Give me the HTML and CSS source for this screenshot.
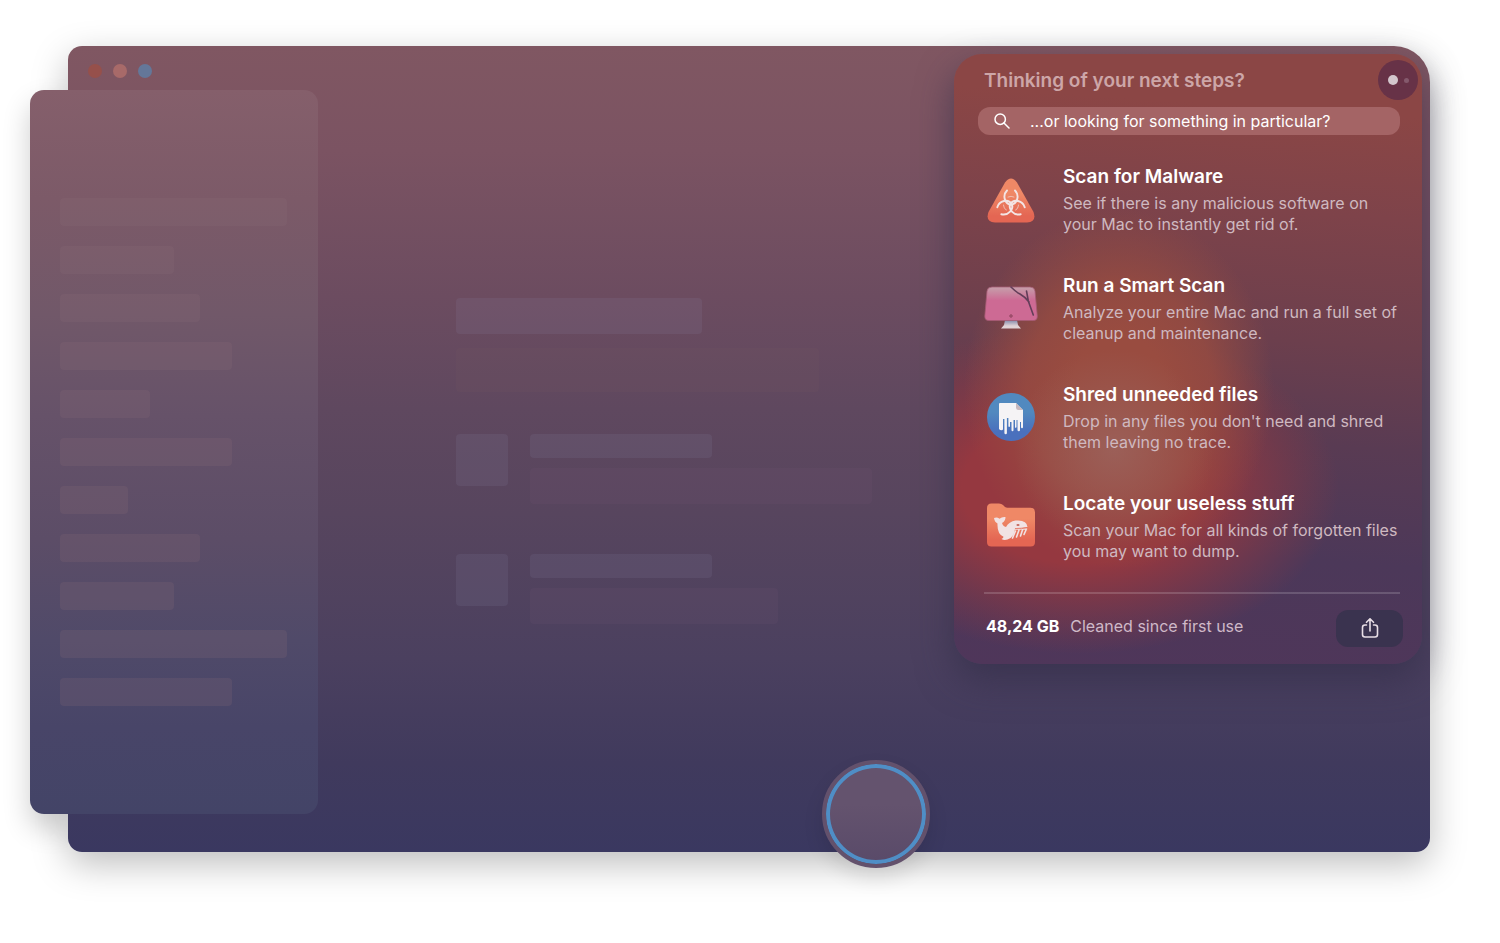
FILE: index.html
```html
<!DOCTYPE html>
<html lang="en">
<head>
<meta charset="UTF-8">
<meta name="viewport" content="width=device-width, initial-scale=1">
<title>Next steps</title>
<link rel="stylesheet" href="styles.css">
</head>
<body>
<div class="window">
  <div class="lights"><i class="red"></i><i class="pink"></i><i class="blue"></i></div>

  <div class="sidebar">
    <span class="bar full"></span>
    <span class="bar small"></span>
    <span class="bar medium"></span>
    <span class="bar large"></span>
    <span class="bar tiny"></span>
    <span class="bar large"></span>
    <span class="bar mini"></span>
    <span class="bar medium"></span>
    <span class="bar small"></span>
    <span class="bar full"></span>
    <span class="bar large"></span>
  </div>

  <div class="content">
    <div class="block heading"></div>
    <div class="block intro"></div>
    <div class="entry">
      <div class="block thumb"></div>
      <div class="lines">
        <div class="block name"></div>
        <div class="block text"></div>
      </div>
    </div>
    <div class="entry">
      <div class="block thumb"></div>
      <div class="lines">
        <div class="block name"></div>
        <div class="block text short"></div>
      </div>
    </div>
  </div>

  <div class="popup">
    <h1>Thinking of your next steps?</h1>
    <button class="more" type="button" aria-label="Assistant"><i></i><i></i></button>

    <label class="search">
      <svg width="16" height="16" viewBox="0 0 16 16" fill="none" stroke="#fff" stroke-width="1.5" stroke-linecap="round"><circle cx="6.2" cy="6.2" r="5.2"/><path d="M10 10l5 5"/></svg>
      <input type="text" aria-label="Search" placeholder="...or looking for something in particular?">
    </label>

    <div class="steps">
      <a href="#malware">
        <svg width="54" height="54" viewBox="0 0 54 54">
          <defs><linearGradient id="orange" x1="0" y1="0" x2="0" y2="1"><stop offset=".35" stop-color="#ef8866"/><stop offset=".85" stop-color="#e46653"/></linearGradient></defs>
          <path fill="url(#orange)" d="M21 10.500Q27 2.500 33 10.500L49.500 40Q53 50 43 50.500H11Q1 50 4.500 40Z"/>
          <g fill="none" stroke="#f3e4e4" stroke-width="1.900" stroke-linecap="round">
            <path id="horn" d="M23 18.500C18 23.500 21 32.500 27 32.500S36 23.500 31 18.500"/>
            <use href="#horn" transform="rotate(120 27 32)"/>
            <use href="#horn" transform="rotate(240 27 32)"/>
            <path id="link" d="M24 25q3-1.500 6 0" stroke-width="1" opacity=".6"/>
            <use href="#link" transform="rotate(120 27 32)"/>
            <use href="#link" transform="rotate(240 27 32)"/>
          </g>
        </svg>
        <div><h2>Scan for Malware</h2><p>See if there is any malicious software on<br>your Mac to instantly get rid of.</p></div>
      </a>
      <a href="#scan">
        <svg width="54" height="54" viewBox="0 0 54 54">
          <defs>
            <linearGradient id="screen" x1="0" y1="0" x2="0" y2="1"><stop offset="0" stop-color="#c6a0ab"/><stop offset=".4" stop-color="#cd6a94"/></linearGradient>
            <linearGradient id="foot" x1="0" y1="0" x2="0" y2="1"><stop offset="0" stop-color="#7e86a8"/><stop offset=".7" stop-color="#e0d3d6"/></linearGradient>
          </defs>
          <path fill="url(#foot)" d="M21 39h12l1 5 3 3.500H17l3-3.500z"/>
          <path fill="url(#screen)" stroke="#a45b74" stroke-width=".8" d="M8 6h38q4.500 0 5 4l2.300 25q.2 4.500-4 4.500H4.800q-4.200 0-4-4.500L3 10q.5-4 5-4z"/>
          <path d="M27 6q5 5 9 7 6 3.500 9 8M42.500 10l1.800 10 5 14" fill="none" stroke="#633e59" stroke-width="1.600" stroke-linecap="round"/>
          <circle cx="27" cy="35" r="1.200" fill="none" stroke="#863f57"/>
        </svg>
        <div><h2>Run a Smart Scan</h2><p>Analyze your entire Mac and run a full set of<br>cleanup and maintenance.</p></div>
      </a>
      <a href="#shred">
        <svg width="54" height="54" viewBox="0 0 54 54">
          <defs><linearGradient id="disc" x1="0" y1="0" x2="0" y2="1"><stop offset=".4" stop-color="#5189bf"/><stop offset=".8" stop-color="#4a70bd"/></linearGradient></defs>
          <circle cx="27" cy="27" r="24" fill="url(#disc)"/>
          <path fill="#f5f3f5" d="M16 13h16l7 7v17q0 1.300-1 1.300t-1-1.300v-5h-1v8q0 1.300-1.200 1.300T33.500 40V30h-1v7q0 .8-.8.8T31 37v-7h-1.500v10q0 1.300-1 1.300t-1-1.300V32h-1.500v4q0 1-.8 1t-.8-1v-8h-1.500v15q0 1.300-1.200 1.300T20.400 43V29H19v10q0 1.300-1.500 1.300T15 39V14q0-1 1-1z"/>
          <path fill="#c9b9be" d="M32 13l7 7h-4.500q-2.500 0-2.500-2.500z"/>
        </svg>
        <div><h2>Shred unneeded files</h2><p>Drop in any files you don't need and shred<br>them leaving no trace.</p></div>
      </a>
      <a href="#locate">
        <svg width="54" height="54" viewBox="0 0 54 54">
          <path fill="url(#orange)" d="M3 9q0-4.500 4.500-4.500H15q2.500 0 4 1.500l2 2q1 .7 2.500.7h23q4.500 0 4.500 4.500V43q0 4.500-4.500 4.500h-39Q3 47.500 3 43z"/>
          <g transform="translate(0 -1)">
            <path fill="#f1e2e3" d="M10 20q3-1.500 5.500.8Q18 18.500 21.500 19q0 4-3.500 6 1 3.500 4 4 3-5.500 9.500-6.500 11.500-1 12 6.500-7 1-12.500 1 0 9-7.500 11.500-3.500 1-6-.500 2-1 2-2.200-6.500-3-6-13.300-3-1.500-3.500-5.500z"/>
            <path d="M31 31h11.500M42 32l-2 4.500M38.500 32l-2 6M35 32l-2.500 7M31.500 33l-3 7" fill="none" stroke="#f1e2e3" stroke-width="1.600" stroke-linecap="round"/>
            <path d="M31 30.500q7 .8 12.500-1" fill="none" stroke="#e37361" stroke-width=".8"/>
            <ellipse cx="34" cy="27" rx="1.600" ry=".9" fill="#c4665d"/>
          </g>
        </svg>
        <div><h2>Locate your useless stuff</h2><p>Scan your Mac for all kinds of forgotten files<br>you may want to dump.</p></div>
      </a>
    </div>

    <div class="footer">
      <b>48,24 GB</b><span>Cleaned since first use</span>
      <button class="share" type="button" aria-label="Share">
        <svg width="18" height="22" viewBox="0 0 18 22" fill="none" stroke="#e9dfe6" stroke-width="1.600" stroke-linecap="round" stroke-linejoin="round"><path d="M5.500 7H4q-2.500 0-2.500 2.500v7Q1.500 19 4 19h10q2.500 0 2.500-2.500v-7Q16.500 7 14 7h-1.500M9 13V.8M5.500 4.300L9 .8l3.500 3.500"/></svg>
      </button>
    </div>
  </div>

  <button class="round" type="button" aria-label="Scan"></button>
</div>
</body>
</html>
```

FILE: styles.css
```css
* {
	box-sizing: border-box;
}
body {
	margin: 0;
	padding: 46px 70px 91px 68px;
	background: #fff;
	color: #fff;
	font-family: Inter, "Liberation Sans", Arial, sans-serif;
}
h1, h2, p {
	margin: 0;
}
button {
	border: 0;
	padding: 0;
	cursor: pointer;
}

.window {
	position: relative;
	display: flex;
	align-items: flex-start;
	border-radius: 14px 36px 14px 14px;
	background: linear-gradient(#805762, #7b5362 13%, #6c4c60 31%, #5f485f 45%, #57455e 58%, #4b405f 76%, #403a5d 89%, #3a3860);
	box-shadow: 0 12px 36px rgba(0, 0, 0, .26);
}
.lights {
	position: absolute;
	top: 18px;
	left: 20px;
	display: flex;
	gap: 11px;
}
.lights i {
	width: 14px;
	height: 14px;
	border-radius: 50%;
}
.red { background: #96504b; }
.pink { background: #a86a69; }
.blue { background: #647799; }

/* placeholders on the left */
.sidebar {
	position: relative;
	display: flex;
	flex: none;
	flex-direction: column;
	gap: 20px;
	width: 288px;
	margin: 44px 0 38px -38px;
	padding: 108px 30px;
	border-radius: 14px;
	background: linear-gradient(#855f6b, #7c5a68 15%, #715869 31%, #665269 45%, #5c4d67 62%, #504a69 76%, #484568 88%, #434467);
}
/* shadow only where the sidebar sticks out of the window */
.sidebar::before {
	content: "";
	position: absolute;
	top: 0;
	bottom: 0;
	left: 0;
	width: 38px;
	border-radius: 14px 0 0 14px;
	box-shadow: 0 14px 28px rgba(0, 0, 0, .2);
	clip-path: inset(-50px 0 -50px -50px);
}
.bar {
	height: 28px;
	border-radius: 4px;
	background: rgba(138, 108, 118, .2);
}
.full { width: 227px; }
.large { width: 172px; }
.medium { width: 140px; }
.small { width: 114px; }
.tiny { width: 90px; }
.mini { width: 68px; }

.content {
	flex: 1;
	min-width: 0;
	padding: 252px 40px 0 138px;
}
.block {
	border-radius: 4px;
	background: rgba(150, 150, 180, .12);
}
.heading {
	width: 246px;
	height: 36px;
}
.intro {
	width: 363px;
	max-width: 100%;
	height: 44px;
	margin: 14px 0 42px;
	background: rgba(130, 100, 100, .1);
}
.entry {
	display: flex;
	gap: 22px;
	margin-bottom: 50px;
}
.thumb {
	flex: none;
	width: 52px;
	height: 52px;
}
.lines {
	flex: 1;
}
.name {
	width: 182px;
	height: 24px;
}
.text {
	width: 342px;
	height: 36px;
	margin-top: 10px;
	background: rgba(120, 90, 120, .12);
}
.short {
	width: 248px;
}

.popup {
	position: relative;
	flex: none;
	width: 468px;
	margin: 8px 8px 0 0;
	padding: 13px 22px 17px 30px;
	border-radius: 28px;
	background:
		radial-gradient(circle at 160px 395px, rgba(156, 100, 94, .8), rgba(156, 90, 84, 0) 100px),
		radial-gradient(ellipse 155px 180px at 165px 335px, rgba(153, 76, 64, 1) 30%, rgba(153, 76, 64, .8) 60%, rgba(153, 76, 64, 0)),
		radial-gradient(ellipse 260px 165px at 125px 435px, rgba(149, 56, 64, 1) 45%, rgba(149, 56, 64, 0)),
		linear-gradient(184deg, #8b4645 10%, #7e434a 26%, #6c3f4d 46%, #593b53 62%, #4c3859 80%, #4f365a);
	box-shadow: 0 16px 36px rgba(46, 44, 70, .6);
}
h1 {
	color: #cda6a8;
	font-size: 19px;
	font-weight: 600;
	line-height: 28px;
}
.more {
	position: absolute;
	top: 6px;
	right: 4px;
	display: flex;
	align-items: center;
	justify-content: center;
	gap: 6px;
	width: 40px;
	height: 40px;
	border-radius: 50%;
	background: #673247;
}
.more i {
	width: 10px;
	height: 10px;
	border-radius: 50%;
	background: #d3c6cd;
}
.more i + i {
	width: 5px;
	height: 5px;
	background: #84596c;
}
.search {
	display: flex;
	align-items: center;
	gap: 20px;
	height: 28px;
	margin: 12px 0 28px -6px;
	padding: 0 16px;
	border-radius: 12px;
	background: #a46465;
}
.search svg {
	flex: none;
}
.search input {
	flex: 1;
	min-width: 0;
	border: 0;
	padding: 0;
	background: none;
	color: #fff;
	font: 16px/28px Inter, "Liberation Sans", Arial, sans-serif;
	outline: 0;
}
.search input::placeholder {
	color: #fff;
	opacity: 1;
}

.steps {
	display: flex;
	flex-direction: column;
	gap: 37px;
}
.steps a {
	display: flex;
	align-items: center;
	gap: 25px;
	color: #fff;
	text-decoration: none;
}
.steps svg {
	flex: none;
}
h2 {
	margin-bottom: 2px;
	font-size: 19px;
	font-weight: 600;
	line-height: 28px;
}
.steps p {
	color: #cfb9c0;
	font-size: 16px;
	line-height: 21px;
	white-space: nowrap;
}

.footer {
	display: flex;
	align-items: flex-start;
	margin: 30px -3px 0 0;
	padding: 16px 0 0 2px;
	background: linear-gradient(rgba(255, 255, 255, .16), rgba(255, 255, 255, .16)) 0 0 / calc(100% - 3px) 2px no-repeat;
	border-top: 2px solid transparent;
	background-origin: border-box;
	font-size: 16px;
	line-height: 32px;
}
.footer span {
	margin-left: 11px;
	color: #cfb9c8;
}
.share {
	display: flex;
	align-items: center;
	justify-content: center;
	width: 67px;
	height: 37px;
	margin-left: auto;
	border-radius: 12px;
	background: #3a334f;
}

.round {
	position: absolute;
	right: 500px;
	bottom: -16px;
	width: 108px;
	height: 108px;
	border: 4px solid #63516c;
	border-radius: 50%;
	background: linear-gradient(#64536e 40%, #594a69);
	box-shadow: inset 0 0 0 4px #4f8ec6, 0 10px 20px rgba(0, 0, 0, .1);
}
```
